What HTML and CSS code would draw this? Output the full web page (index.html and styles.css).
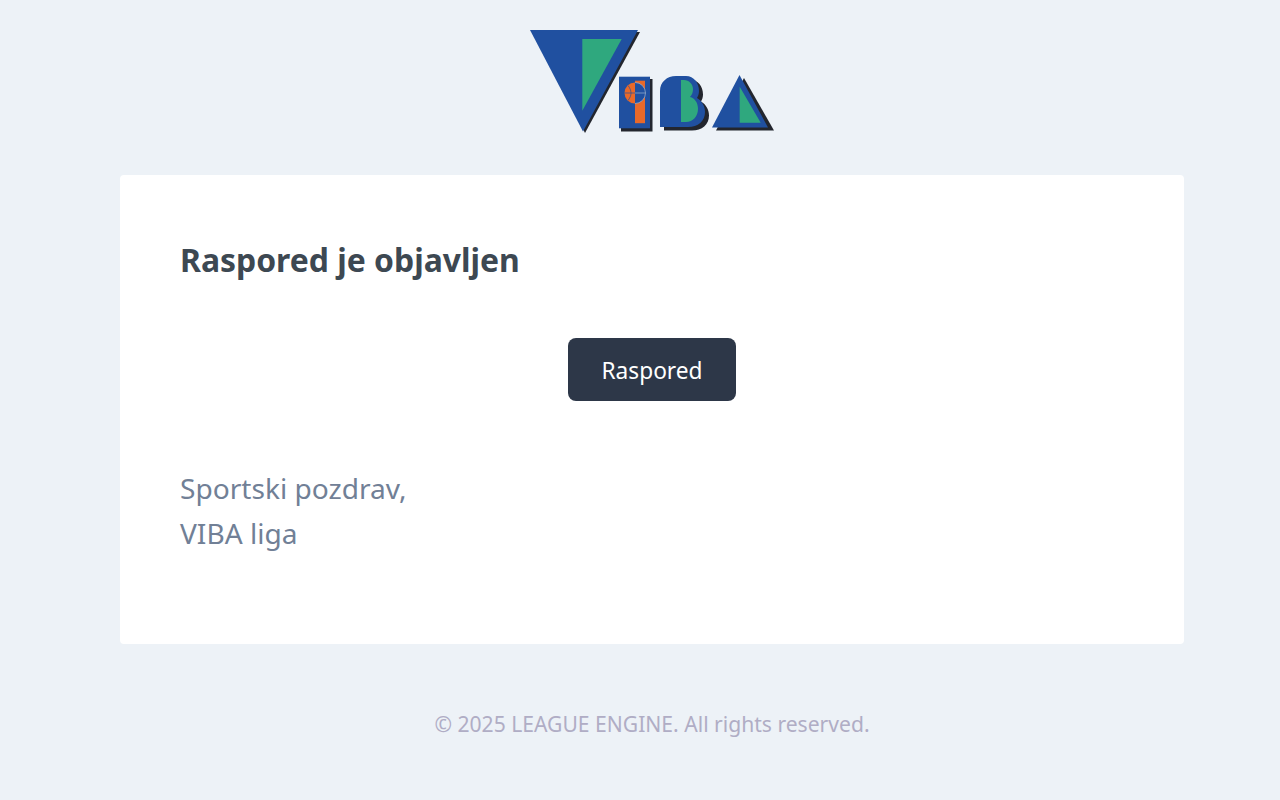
FILE: index.html
```html
<!DOCTYPE html>
<html lang="en">
<head>
    <meta charset="UTF-8">
    <meta name="viewport" content="width=device-width, initial-scale=1.0">
    <title>Raspored je objavljen</title>
    <link rel="stylesheet" href="styles.css">
</head>
<body>
    <div class="wrapper">
        <!-- Logo -->
        <div class="header">
            <svg class="logo" width="246" height="103" viewBox="529 30 246 103" role="img" aria-label="VIBA">
                <!-- V -->
                <polygon class="shadow" points="532,32 640,32 585,133"/>
                <polygon class="blue" points="530,30 638,30 583,131.5"/>
                <polygon class="green" points="582.3,39 621.7,39 582.3,110.7"/>
                <!-- I with ball -->
                <rect class="shadow" x="621" y="79" width="31.5" height="52.5"/>
                <rect class="blue" x="619" y="76.7" width="31" height="51.6"/>
                <rect class="orange" x="635" y="80.7" width="10" height="42.5"/>
                <path class="orange" d="M635 82.5a10.5 10.5 0 0 0 0 21z"/>
                <path class="blue" d="M635 82.5a10.5 10.5 0 0 1 0 21z"/>
                <path class="ball-line" d="M635 82.5a10.5 10.5 0 0 1 0 21M635 93h10.5"/>
                <path class="ball-seam" d="M624.5 93h10.5M628 85.5c4 5 4 10 0 15"/>
                <!-- B -->
                <path class="shadow" transform="translate(4 3.5)" d="M660 127V91C660 82 667 76 676 76H686C694 76 699 83 699 91C699 94 698 96 697 98C702 101 705 106 705 112C705 121 698 127 688 127Z"/>
                <path class="blue" d="M660 127V91C660 82 667 76 676 76H686C694 76 699 83 699 91C699 94 698 96 697 98C702 101 705 106 705 112C705 121 698 127 688 127Z"/>
                <path class="green" d="M681 80H684C689 80 693 84 693 89C693 92 692 95 690 97C695 98 698 103 698 109C698 116 693 122 686 122H681Z"/>
                <!-- A -->
                <polygon class="shadow" points="744,78 774,130.5 716,130.5"/>
                <polygon class="blue" points="739.5,75 768,127.5 712,127.5"/>
                <polygon class="green" points="739.7,86.7 760.7,122.7 739.7,122.7"/>
            </svg>
        </div>

        <!-- Message -->
        <div class="card">
            <h1>Raspored je objavljen</h1>
            <div class="action">
                <a href="#" class="button">Raspored</a>
            </div>
            <p>Sportski pozdrav,<br>VIBA liga</p>
        </div>

        <div class="footer">© 2025 LEAGUE ENGINE. All rights reserved.</div>
    </div>
</body>
</html>
```

FILE: styles.css
```css
body {
    font-family: "Noto Sans", "Open Sans", Arial, sans-serif;
    margin: 0;
    padding: 0;
    background-color: #edf2f7;
}
.wrapper {
    padding: 0 96px 0 120px;
}
.header {
    display: flex;
    justify-content: center;
    padding: 30px 0 42px;
}
.logo {
    display: block;
    filter: blur(0.4px);
}
.blue { fill: #2050a0; }
.green { fill: #2fa87e; }
.orange { fill: #e8692a; }
.shadow { fill: #23262e; }
.ball-line {
    fill: none;
    stroke: #9fb4cf;
    stroke-width: 0.7;
}
.ball-seam {
    fill: none;
    stroke: #2050a0;
    stroke-width: 0.7;
}
.card {
    background-color: white;
    border-radius: 4px;
    padding: 60px;
    height: 469px;
    box-sizing: border-box;
}
h1 {
    margin: 0;
    color: #3d4852;
    font-size: 31.9px;
    line-height: 50px;
    font-weight: 700;
}
.action {
    display: flex;
    justify-content: center;
    margin-top: 53px;
}
.button {
    display: block;
    width: 168px;
    height: 63px;
    line-height: 66px;
    text-align: center;
    background-color: #2d3748;
    border-radius: 8px;
    color: white;
    font-size: 22.7px;
    text-decoration: none;
}
p {
    margin: 65px 0 0;
    color: #718096;
    font-size: 28.1px;
    line-height: 45px;
}
.footer {
    margin-top: 64px;
    text-align: center;
    color: #b0adc5;
    font-size: 21.1px;
    line-height: 32px;
}
```
